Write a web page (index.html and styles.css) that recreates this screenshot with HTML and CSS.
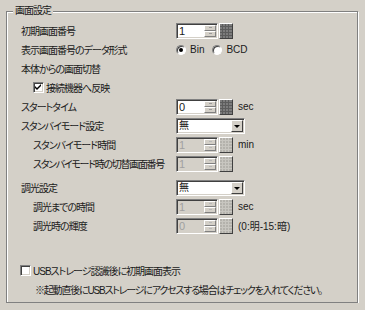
FILE: index.html
```html
<!DOCTYPE html>
<html lang="ja">
<head>
    <meta charset="UTF-8">
    <title>画面設定</title>
    <link rel="stylesheet" href="styles.css">
</head>
<body>
    <div class="group">
        <span class="legend">画面設定</span>

        <div class="row">
            <span class="label">初期画面番号</span>
            <span class="spin">
                <span class="spin-field"><span class="spin-value">1</span><span class="spin-btns"><span class="spin-btn"></span><span class="spin-btn"></span></span></span>
                <span class="keypad"></span>
            </span>
        </div>

        <div class="row">
            <span class="label">表示画面番号のデータ形式</span>
            <span class="radio-group">
                <span class="radio checked"></span><span class="opt">Bin</span>
                <span class="radio"></span><span class="opt">BCD</span>
            </span>
        </div>

        <div class="row">
            <span class="label">本体からの画面切替</span>
        </div>

        <div class="row sub">
            <span class="check checked"><svg width="7" height="7" viewBox="0 0 7 7"><path d="M0 2 L2 4 L6 0 L6 2 L2 6 L0 4 Z" fill="#000"/></svg></span>
            <span class="check-text">接続機器へ反映</span>
        </div>

        <div class="row">
            <span class="label">スタートタイム</span>
            <span class="spin">
                <span class="spin-field"><span class="spin-value">0</span><span class="spin-btns"><span class="spin-btn"></span><span class="spin-btn"></span></span></span>
                <span class="keypad"></span>
            </span>
            <span class="unit">sec</span>
        </div>

        <div class="row">
            <span class="label">スタンバイモード設定</span>
            <span class="select"><span class="select-value">無</span><span class="select-btn"></span></span>
        </div>

        <div class="row">
            <span class="label sub">スタンバイモード時間</span>
            <span class="spin disabled">
                <span class="spin-field"><span class="spin-value">1</span><span class="spin-btns"><span class="spin-btn"></span><span class="spin-btn"></span></span></span>
                <span class="keypad"></span>
            </span>
            <span class="unit">min</span>
        </div>

        <div class="row">
            <span class="label sub tight">スタンバイモード時の切替画面番号</span>
            <span class="spin disabled">
                <span class="spin-field"><span class="spin-value">1</span><span class="spin-btns"><span class="spin-btn"></span><span class="spin-btn"></span></span></span>
                <span class="keypad"></span>
            </span>
        </div>

        <div class="row spaced">
            <span class="label">調光設定</span>
            <span class="select"><span class="select-value">無</span><span class="select-btn"></span></span>
        </div>

        <div class="row">
            <span class="label sub">調光までの時間</span>
            <span class="spin disabled">
                <span class="spin-field"><span class="spin-value">1</span><span class="spin-btns"><span class="spin-btn"></span><span class="spin-btn"></span></span></span>
                <span class="keypad"></span>
            </span>
            <span class="unit">sec</span>
        </div>

        <div class="row">
            <span class="label sub">調光時の輝度</span>
            <span class="spin disabled">
                <span class="spin-field"><span class="spin-value">0</span><span class="spin-btns"><span class="spin-btn"></span><span class="spin-btn"></span></span></span>
                <span class="keypad"></span>
            </span>
            <span class="unit">(0:明-15:暗)</span>
        </div>

        <div class="row usb">
            <span class="check"></span>
            <span class="check-text">USBストレージ認識後に初期画面表示</span>
        </div>
        <div class="row note">※起動直後にUSBストレージにアクセスする場合はチェックを入れてください。</div>
    </div>
</body>
</html>
```

FILE: styles.css
```css
body {
    margin: 0;
    background: #d4d0c8;
    font-family: "Liberation Sans", "Noto Sans CJK JP", sans-serif;
    font-size: 10px;
    font-feature-settings: "palt";
    letter-spacing: -1px;
    color: #1a1a1a;
}
.group {
    position: relative;
    margin: 11px 7px 0 6px;
    height: 292px;
    box-sizing: border-box;
    padding: 9px 0 0 14px;
    border: 1px solid #808080;
    box-shadow: inset 1px 1px #fff, 1px 1px #fff;
}
.legend {
    position: absolute;
    top: -7px;
    left: 6px;
    padding: 0 2px;
    background: #d4d0c8;
    line-height: 12px;
}
.row {
    display: flex;
    align-items: center;
    height: 19px;
    white-space: nowrap;
}
.row.spaced {
    margin-top: 5px;
}
.label {
    width: 155px;
    flex: none;
}
.label.sub {
    box-sizing: border-box;
    padding-left: 12px;
}
.label.tight {
    letter-spacing: -1.3px;
}
.row.sub {
    padding-left: 12px;
}

/* spin box with keypad button */
.spin {
    display: flex;
    height: 16px;
}
.spin-field {
    display: flex;
    width: 42px;
    height: 16px;
    box-sizing: border-box;
    padding: 1px;
    background: #fff;
    border: 1px solid;
    border-color: #808080 #fff #fff #808080;
    box-shadow: inset 1px 1px #404040, inset -1px -1px #d4d0c8;
}
.spin-value {
    flex: 1;
    padding-left: 1px;
    line-height: 12px;
    font-size: 11px;
    letter-spacing: 0;
}
.spin-btns {
    display: flex;
    flex-direction: column;
    width: 12px;
}
.spin-btn {
    position: relative;
    flex: 1;
    background: #d4d0c8;
    box-sizing: border-box;
    border: 1px solid;
    border-color: #fff #808080 #808080 #fff;
}
.spin-btn::after {
    content: "";
    position: absolute;
    left: 4px;
    top: 1px;
    width: 3px;
    height: 1px;
    background: #9a9a9a;
}
.keypad {
    width: 14px;
    height: 16px;
    margin-left: 1px;
    box-sizing: border-box;
    border: 1px solid;
    border-color: #fff #404040 #404040 #fff;
    background-color: #7c7c7c;
    background-image:
        linear-gradient(90deg, transparent 1px, #5c5c5c 1px, #5c5c5c 2px, transparent 2px, transparent 4px, #5c5c5c 4px, #5c5c5c 5px, transparent 5px, transparent 7px, #5c5c5c 7px, #5c5c5c 8px, transparent 8px),
        linear-gradient(180deg, transparent 2px, #5c5c5c 2px, #5c5c5c 3px, transparent 3px, transparent 5px, #5c5c5c 5px, #5c5c5c 6px, transparent 6px, transparent 8px, #5c5c5c 8px, #5c5c5c 9px, transparent 9px, transparent 11px, #5c5c5c 11px, #5c5c5c 12px, transparent 12px);
    background-repeat: no-repeat;
    background-position: 1px 0, 0 0;
}
.spin.disabled .spin-field {
    background: #d4d0c8;
}
.spin.disabled .spin-value {
    color: #a0a0a0;
}
.spin.disabled .spin-btn::after {
    background: #b8b8b8;
}
.spin.disabled .keypad {
    background-color: #b4b2ac;
    background-image:
        linear-gradient(90deg, transparent 1px, #c8c6c0 1px, #c8c6c0 2px, transparent 2px, transparent 4px, #c8c6c0 4px, #c8c6c0 5px, transparent 5px, transparent 7px, #c8c6c0 7px, #c8c6c0 8px, transparent 8px),
        linear-gradient(180deg, transparent 2px, #c8c6c0 2px, #c8c6c0 3px, transparent 3px, transparent 5px, #c8c6c0 5px, #c8c6c0 6px, transparent 6px, transparent 8px, #c8c6c0 8px, #c8c6c0 9px, transparent 9px, transparent 11px, #c8c6c0 11px, #c8c6c0 12px, transparent 12px);
}
.unit {
    margin-left: 5px;
    letter-spacing: 0;
}

/* drop-down */
.select {
    display: flex;
    width: 69px;
    height: 16px;
    box-sizing: border-box;
    padding: 1px;
    background: #fff;
    border: 1px solid;
    border-color: #808080 #fff #fff #808080;
    box-shadow: inset 1px 1px #404040, inset -1px -1px #d4d0c8;
}
.select-value {
    flex: 1;
    padding-left: 1px;
    line-height: 12px;
}
.select-btn {
    position: relative;
    width: 12px;
    background: #d4d0c8;
    box-sizing: border-box;
    border: 1px solid;
    border-color: #fff #404040 #404040 #fff;
}
.select-btn::after {
    content: "";
    position: absolute;
    left: 2px;
    top: 4px;
    border-left: 3px solid transparent;
    border-right: 3px solid transparent;
    border-top: 3px solid #000;
}

/* radio buttons */
.radio-group {
    display: flex;
    align-items: center;
}
.radio {
    position: relative;
    width: 10px;
    height: 10px;
    box-sizing: border-box;
    border-radius: 50%;
    background: #fff;
    border: 1px solid;
    border-color: #808080 #fff #fff #808080;
    box-shadow: inset 1px 1px #404040;
}
.radio.checked::after {
    content: "";
    position: absolute;
    left: 2px;
    top: 2px;
    width: 4px;
    height: 4px;
    border-radius: 50%;
    background: #000;
}
.opt {
    margin: 0 8px 0 4px;
    letter-spacing: 0;
}

/* check boxes */
.check {
    display: flex;
    align-items: center;
    justify-content: center;
    width: 11px;
    height: 11px;
    box-sizing: border-box;
    background: #fff;
    border: 1px solid;
    border-color: #808080 #fff #fff #808080;
    box-shadow: inset 1px 1px #404040, inset -1px -1px #d4d0c8;
}
.check-text {
    margin-left: 2px;
}
.row.usb {
    margin-top: 26px;
}
.row.usb .check {
    margin-left: -1px;
}
.row.note {
    padding-left: 14px;
    letter-spacing: -1.2px;
}
```
